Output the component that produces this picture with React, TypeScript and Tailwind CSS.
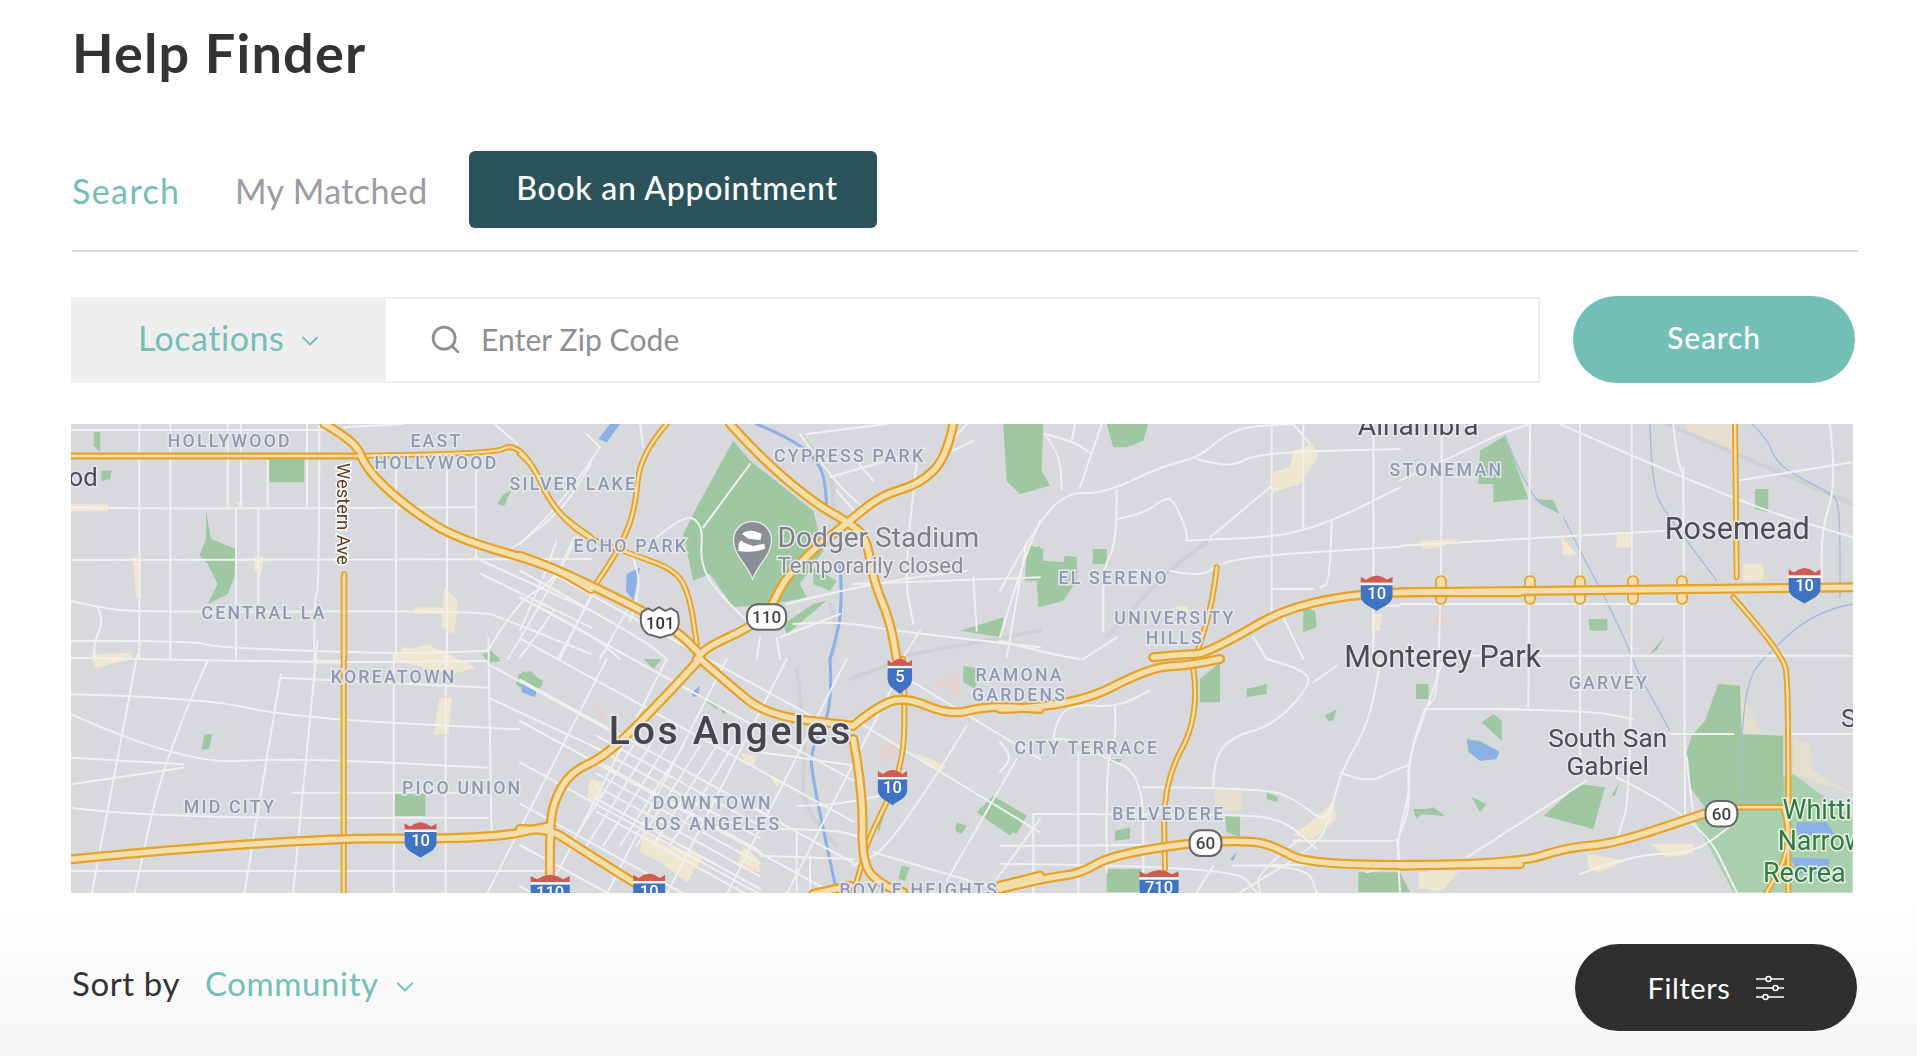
import React from "react";
import { ChevronDown, Search as SearchIcon } from "lucide-react";

type P = number[];
type Crop = {
  o: [number, number, number, number];
  minor?: P[]; thin?: P[]; major?: P[]; park?: P[]; light?: P[]; cream?: P[]; tan?: P[]; water?: P[]; river?: P[]; rail?: P[]; pink?: P[];
};

const A: Crop = {
  o: [71, 423, 3, 3],
  minor: [
    [0,18,760,18],[820,10,1000,0],[0,250,200,255,1210,250],[0,408,1560,405],[0,530,80,550,200,565,1230,560,1300,585,1560,690],[0,650,390,650,410,670,1010,690,1250,680],
    [205,0,205,705],[298,0,298,705],[470,0,470,250],[510,0,510,250],[495,255,495,705],[562,255,562,550],[590,110,590,250],[708,0,708,250],[745,0,745,500,730,520,730,705],
    [975,100,975,705],[1128,100,1128,705],[1215,100,1215,400],[1210,400,1560,560],[1230,450,1560,610],[1250,680,1340,530,1440,480,1520,340],[1310,705,1440,490,1510,340],
    [1320,375,1460,280,1560,120],[1460,705,1560,520],[80,550,100,590,70,650,70,705],[1270,0,1340,60],
  ],
  thin: [[880,95,1270,90,1320,60,1380,110,1450,260,1560,340],[820,450,820,705]],
  major: [[760,0,850,50,880,120,930,180,1030,265,1160,345,1440,425,1560,495]],
  park: [[405,262,420,345,495,375,490,460,470,510,410,540,440,480,410,420,385,395,405,345],[595,105,700,105,700,175,595,175],[68,25,88,25,88,85,68,65],[90,140,122,140,118,165,92,172],[1320,200,1300,245,1278,240,1298,210],[1240,700,1260,685,1290,705]],
  cream: [[1120,490,1160,530,1150,630,1110,610],[1030,550,1120,550,1120,570,1030,570],[490,230,520,235,510,255],[185,400,210,400,210,520,195,520],[550,395,578,400,570,460,550,440],[990,670,1130,680,1130,705,990,705],[100,690,180,690,180,705,100,705],[0,240,110,240,110,262,0,262]],
};
const Z: Crop = {
  o: [0, 420, 1.638, 3],
  minor: [
    [117,710,520,725,800,720],[117,820,330,830,480,890,850,925],[117,880,300,1030,480,1010,800,1040],[117,1010,300,1030],[117,1090,300,1040],[117,1160,240,1190,800,1190],
    [117,1350,900,1350],[480,1115,800,1115],[460,770,800,800],[340,720,270,1000,220,1420],[225,700,150,1420],[460,760,400,1420],[520,660,480,1420],[645,700,645,1420],[730,700,730,1420],[800,650,805,1240],
    [800,730,1000,930],[800,830,1000,1000],
  ],
  thin: [[563,470,563,1420]],
  major: [[117,1315,480,1250,800,1255,900,1215]],
  park: [[646,1115,697,1115,697,1185,646,1185],[335,940,348,940,342,985,330,985],[790,700,805,690,820,720,800,725],[850,760,870,750,890,790,870,825,845,790]],
  cream: [[650,700,700,670,780,740,740,760,650,720],[720,830,740,830,735,940,710,940],[150,700,215,695,215,715,155,740],[510,715,560,715,560,730,510,730]],
};
const B: Crop = {
  o: [520, 423, 3, 3],
  rail: [[850,40,940,150,940,260],[930,540,960,640,930,705],[1130,700,1560,620]],
  minor: [
    [0,440,360,640,440,705],[0,520,200,620,300,705],[60,480,0,620],[225,490,120,705],[320,560,240,705],[240,70,140,220,0,360],[110,350,70,460],[330,380,360,450,350,530,330,590],
    [410,340,500,265,550,310,540,400,570,480,680,590],[550,310,690,120],[800,540,1040,480,1340,440],[820,600,950,590,1120,620,1560,670],[1360,460,1370,620],[1190,120,1150,440,1180,600],[780,640,960,570],
    [1000,480,1560,460],[1440,640,1500,440,1560,290],[840,30,940,170,1040,260],[930,160,1200,80],[1000,100,1060,170],[860,30,1100,0],[1340,0,1250,100],[950,200,1020,280],[1300,80,1360,50],
    [200,30,240,70],[360,0,370,70],[0,700,60,620,100,560],[1150,700,1200,620],[720,640,710,705],[770,640,780,705],
  ],
  thin: [[0,90,40,120,90,240,190,340,350,395,470,440,510,520,530,660],[440,0,360,90,345,260,300,370,225,485]],
  major: [
    [0,395,100,430,360,555,470,620,540,690],[630,0,720,100,880,235,985,295,1040,340,1060,470,1110,590,1130,705],
    [1300,0,1280,100,1200,180,1080,215,985,295,880,375,790,470,750,560,690,610,560,670,530,705],
  ],
  park: [[640,50,690,110,880,260,910,380,840,480,860,520,760,540,640,550,570,450,520,470,490,330,530,250,590,140],[880,430,950,470,930,500,880,480],[800,630,920,530,880,540,790,600],[1450,0,1560,0,1560,170,1530,180,1500,210,1460,170],[1320,620,1450,580,1445,640],[1520,380,1560,365,1560,470,1515,470]],
  water: [[235,45,270,0,300,0,260,55],[320,450,360,430,340,530,318,500]],
  river: [[710,0,830,50,910,130,920,240],[960,420,970,560,930,705]],
};
const lat: P[] = [];
for (let i = 0; i < 17; i += 2) lat.push([0, -310 + i * 62, 1000, 240 + i * 62]);
for (let i = 0; i < 7; i++) lat.push([230, 230 + i * 38, 720, 500 + i * 38]);
for (let i = 0; i < 12; i += 2) lat.push([-100 + i * 90, 705, 260 + i * 90, 0]);
for (let i = 0; i < 7; i++) lat.push([150 + i * 50, 560, 340 + i * 50, 260]);
const C: Crop = {
  o: [520, 658, 3, 3],
  rail: [[830,30,860,260,840,430,950,560],[990,60,1100,20]],
  minor: [...lat, [1000,180,1560,520],[1180,70,1560,300],[1340,200,1120,560,1000,620],[1490,300,1280,665],[1560,480,1430,660],[720,280,1010,320],[730,510,950,510,1030,540],[830,440,930,440,1080,410],[720,590,1000,600],[830,520,830,700],[870,590,870,700],[1060,580,1400,680]],
  thin: [[1150,0,1155,110,1150,330,1040,550,1025,620,1000,700]],
  major: [
    [540,0,420,130,260,290,150,340,100,430,90,510,90,705],[0,510,90,510,150,550,340,670,400,705],[540,0,620,70,740,170,1000,200],
    [1000,200,1060,150,1150,110,1290,170,1400,140,1560,150],[1000,240,1030,400,1025,620,1090,680,1150,700],[1440,680,1560,650],[880,705,990,680],
  ],
  park: [[1420,410,1520,470,1470,530,1370,460],[1310,490,1340,500,1325,525,1305,515],[1145,620,1170,625,1155,665,1135,660],[1105,430,1075,525,1075,490],[560,120,600,140,590,150,560,130],[600,150,620,160,610,165],[1330,20,1380,30,1365,90,1330,70],[5,35,70,65,55,85,5,60],[370,0,425,0,400,30]],
  cream: [[370,520,440,560,550,590,500,670,420,610,360,580],[670,560,715,600,720,640,650,620],[210,360,250,370,240,420,200,425],[750,350,785,370,770,385],[660,280,710,290,700,320,680,320],[1180,280,1280,320,1260,340]],
  pink: [[1080,260,1130,240,1130,300,1090,310],[1240,70,1320,50,1320,120],[210,140,260,165,240,185]],
  water: [[515,100,540,80,535,110,520,115],[5,75,50,90,45,115,5,100]],
  river: [[930,0,940,150,870,270,880,370,950,700]],
};
const D: Crop = {
  o: [1000, 423, 3, 3],
  rail: [[320,640,500,440,620,355]],
  minor: [
    [0,500,80,350,190,205,310,210,490,125,600,100,700,10,880,0],[590,105,690,135,770,85,1200,75],[815,0,815,560],[910,0,910,310],[1120,0,1120,700],[630,340,810,190],
    [560,350,640,345,830,340,990,295,1200,190],[670,420,700,400,1200,368],[350,200,350,290,340,380,310,430,310,620],[350,285,430,270,490,225,520,225,560,320,560,350],[510,440,600,460,660,420],
    [815,495,940,495],[1160,545,1200,545],[995,295,990,480,960,490],[240,190,305,0],[135,30,180,90,185,195],[135,30,215,50,275,90],[215,50,225,0],[0,650,150,690,240,705],[20,700,80,350],[880,0,930,60],
    [350,640,250,705],[760,640,800,705],[850,580,910,705],
  ],
  thin: [[650,430,640,530,590,690]],
  major: [[460,700,560,690,620,690,940,505,1560,505]],
  park: [[20,0,130,0,125,140,150,185,60,210,20,170],[320,0,445,0,430,50,380,70,340,70],[90,365,130,375,130,410,190,415,195,395,230,400,230,470,190,530,115,550,110,470,75,470],[278,375,320,375,320,420,278,420],[910,550,945,560,950,610,910,625]],
  cream: [[820,145,870,130,880,80,940,60,955,95,900,180,820,205],[1115,570,1145,570,1140,620,1115,620],[530,545,565,545,560,600,530,600]],
  pink: [[1305,570,1340,570,1340,600,1305,600]],
};
const E: Crop = {
  o: [1000, 658, 3, 3],
  minor: [
    [0,250,40,290,0,340],[160,240,170,170,230,135,350,145,450,95],[345,145,350,240,320,300,320,640],[160,240,210,235,300,290,430,345,430,640],[235,280,235,700],[100,465,100,700],[100,465,700,465,850,480,950,570],
    [430,385,800,385,900,430,970,490,1000,430],[0,560,480,560,570,545],[640,385,640,300,700,230,820,200,940,70,900,30,800,0],[1140,0,1120,170,1020,340,990,480,950,560,720,700],[1020,340,1100,375,1190,330,1225,320],
    [1330,0,1280,150,1225,300,1230,400,1190,540,1200,700],[1280,150,1560,150],[880,545,1190,545],[0,615,700,620,770,700],[750,620,920,620,950,700],[640,620,590,700],[900,540,770,640,780,700],[1100,640,1180,620],
    [940,70,1010,20],[1190,540,1200,610],[700,620,1100,615],
  ],
  thin: [[580,30,600,170,490,370,495,630]],
  major: [[0,150,220,145,450,25,560,20,660,0],[0,690,140,655,240,645,330,590,580,550,750,545,820,560,930,620,1560,615]],
  park: [[600,60,660,10,660,130,600,130],[740,90,800,75,800,105,740,115],[1250,75,1285,75,1285,120,1250,120],[975,170,1010,150,1000,185,985,185],[0,430,80,470,50,525,0,495],[345,515,390,505,390,540,345,545],[675,470,720,470,720,535,680,520],[800,400,835,415,830,430,800,420],[1240,450,1280,450,1300,445,1335,470,1265,465,1250,480],[320,630,425,630,415,700,320,700],[1075,640,1200,640,1230,700,1075,700],[325,300,365,300,360,310,325,310]],
  tan: [[645,390,725,390,725,455,645,455]],
  cream: [[880,530,1000,430,1010,480,940,540],[1255,640,1375,640,1330,690,1255,690]],
  water: [[690,600,710,580,700,605]],
};
const F: Crop = {
  o: [1400, 423, 3, 3],
  rail: [[800,0,1357,240]],
  minor: [
    [0,365,800,320],[390,0,385,850],[540,0,540,1000],[695,0,700,1090,650,1250],[850,130,855,1170],[820,0,830,100,850,160],[480,0,1000,230,1357,340],[1010,170,1357,115],[1290,0,1310,180,1265,310,1265,480],
    [0,695,1357,695],[75,855,540,855,700,885],[75,855,20,1000,30,1150,0,1230],[810,930,1000,930],[1170,930,1357,930],[650,1060,900,1180,1010,1405],[200,1300,560,1070],[0,540,860,540],[125,0,125,800,75,855],[120,115,300,30],[0,170,120,115],
    [300,30,390,0],[540,1350,700,1290,880,1290,1000,1200],[880,1180,860,1000],
  ],
  thin: [[1005,0,1010,460],[1000,520,1150,690,1165,780,1165,1405],[1010,1150,1150,1150],[1150,1150,1165,1200,1160,1300,1100,1405]],
  major: [[0,505,1357,490],[0,1325,350,1320,500,1270,640,1260,910,1170]],
  light: [[1180,1050,1357,1180,1357,1405,1000,1405,880,1180,920,1140]],
  park: [[240,80,315,35,385,225,280,235,280,180,235,180],[400,225,460,228,478,270],[1065,195,1105,195,1105,265,1065,255],[565,585,622,585,622,620,570,620],[48,782,85,782,85,825,48,825],[750,690,795,635,770,680],[245,895,280,870,305,890,305,950],[430,1175,540,1080,615,1090,580,1215],[635,1115,660,1070,645,1115],[955,780,1020,785,1025,930,1150,935,1150,1150,1010,1150,915,1150,870,1090,860,985,875,935,915,890],[200,945,240,950,298,985,290,1005,240,1010,205,985],[215,1120,260,1140,240,1165],[40,1155,90,1155,130,1175,60,1170,50,1185]],
  tan: [[860,0,1000,0,1000,90,860,30],[1180,940,1230,960,1240,1040,1357,1110,1180,1050],[1020,800,1085,930,1120,950,1090,950,1020,930]],
  cream: [[1030,420,1090,420,1090,470,1030,470],[750,1260,880,1260,880,1290,800,1300],[560,1290,680,1310,600,1345,565,1330],[90,1340,175,1340,120,1400,90,1400],[480,330,520,380,530,390,490,395],[650,325,700,330,695,370,650,370],[60,350,180,345,120,370,70,375]],
  water: [[1190,1195,1280,1195,1310,1240,1190,1230],[1170,1300,1290,1305,1280,1350,1200,1350]],
};
const lake: P[] = [[1400,245,1440,250,1495,275,1490,300,1440,305,1410,280]];
const fine: P[] = [[1055,0,1100,40,1135,130,1290,205,1320,240,1320,520],[750,0,755,190,800,270,860,350,950,470],[490,280,550,400,620,530,690,680,710,740,810,920],[1357,540,1250,560,1100,690,1040,770,1020,1000,1030,1100],[315,35,390,225,475,265]];
const crops = [Z, A, B, C, D, E, F];

const tr = (c: Crop, a: P) => {
  const [ox, oy, kx, ky] = c.o;
  return a.map((v, i) => (i % 2 ? oy + v / ky : ox + v / kx));
};
const pts = (c: Crop, a: P) => tr(c, a).map((v) => v.toFixed(1)).join(",");
const smooth = (c: Crop, raw: P) => {
  const a = tr(c, raw).map((v) => +v.toFixed(1));
  let d = `M${a[0]} ${a[1]}`;
  for (let i = 2; i < a.length - 2; i += 2) {
    d += `Q${a[i]} ${a[i + 1]} ${(a[i] + a[i + 2]) / 2} ${(a[i + 1] + a[i + 3]) / 2}`;
  }
  return d + `L${a[a.length - 2]} ${a[a.length - 1]}`;
};
const fills = (key: "cream" | "tan" | "light" | "park" | "water" | "pink", fill: string) =>
  crops.flatMap((c, i) => (c[key] || []).map((p, j) => <polygon key={`${key}${i}${j}`} points={pts(c, p)} fill={fill} />));
const strokes = (key: "minor" | "thin" | "major" | "river" | "rail", stroke: string, w: number) =>
  crops.flatMap((c, i) => (c[key] || []).map((p, j) => <path key={`${key}${stroke}${i}${j}`} d={smooth(c, p)} stroke={stroke} strokeWidth={w} />));

const labels: [string, number, number][] = [
  ["HOLLYWOOD",188,365],["EAST",357,365],["HOLLYWOOD",357,383],["SILVER LAKE",469,400],["CYPRESS PARK",695,377],["ECHO PARK",516,451],
  ["CENTRAL LA",216,506],["KOREATOWN",322,558],["PICO UNION",378,649],["MID CITY",188,664],["DOWNTOWN",583,661],["LOS ANGELES",583,678],
  ["EL SERENO",911,477],["UNIVERSITY",961,510],["HILLS",961,526],["RAMONA",834,556],["GARDENS",834,573],["CITY TERRACE",889,616],
  ["BELVEDERE",956,670],["STONEMAN",1183,389],["GARVEY",1316,563],["BOYLE HEIGHTS",752,732],
];
const cities: [string, number, number, number][] = [
  ["Alhambra",1160,355,23],["Rosemead",1421,440,25],["Monterey Park",1180,545,25],["South San",1315,610,21.5],["Gabriel",1315,633,21.5],["od",68,397,21],["S",1512,594,21],
];
const green: [string, number, number][] = [["Whitti",1458,669],["Narrow",1454,695],["Recrea",1442,721]];

const Interstate = ({ x, y, n, w = 26 }: { x: number; y: number; n: string; w?: number }) => (
  <g transform={`translate(${x} ${y})`}>
    <path d={`M${-w / 2} -8V-13l${w / 6} 2.5 ${w / 6} -2.5 ${w / 6} -1 ${w / 6} 1 ${w / 6} 2.5 ${w / 6} -2.5V-8Z`} fill="#cf5b55" />
    <rect x={-w / 2} y={-8} width={w} height={2} fill="#fff" />
    <path d={`M${-w / 2} -6H${w / 2}V3C${w / 2} 9 ${w / 6} 12 0 15C${-w / 6} 12 ${-w / 2} 9 ${-w / 2} 3Z`} fill="#3f73c4" />
    <text x={0} y={5} textAnchor="middle" fontSize={13.5} fontWeight={500} fill="#fff">{n}</text>
  </g>
);
const Pill = ({ x, y, n, w = 28 }: { x: number; y: number; n: string; w?: number }) => (
  <g>
    <rect x={x - w / 2} y={y - 10.5} width={w} height={21} rx={9} fill="#fff" stroke="#666" strokeWidth={1.6} />
    <text x={x} y={y + 5} textAnchor="middle" fontSize={14} fontWeight={500} fill="#444">{n}</text>
  </g>
);

function MapArt() {
  return (
    <svg viewBox="71 423 1782 469" className="block w-full h-full blur-[0.4px]" fontFamily="Roboto, sans-serif">
      <rect x={71} y={423} width={1782} height={469} fill="#d8d9dd" />
      {fills("cream", "#efe7cf")}
      {fills("tan", "#e4dfcf")}
      {fills("pink", "#e2d3d2")}
      {fills("light", "#a9cfac")}
      {fills("park", "#9fc8a2")}
      {fills("water", "#8cb0e8")}
      {lake.map((p, i) => <polygon key={i} points={pts(E, p)} fill="#8cb0e8" />)}
      <g fill="none" strokeLinecap="round" strokeLinejoin="round">
        {strokes("rail", "#cfd0d4", 4)}
        {fine.map((p, i) => <path key={i} d={smooth(F, p)} stroke="#a3bbe0" strokeWidth={1.3} />)}
        {strokes("river", "#8cb0e8", 3)}
        {strokes("minor", "#f0f0f0", 2)}
      </g>
      <g fill="#f3deaa" stroke="#e5a128" strokeWidth={1.7}>
        {[1441, 1530, 1580, 1633, 1682].map((x) => <rect key={x} x={x - 5} y={575} width={10} height={28} rx={5} />)}
      </g>
      <g fill="none" strokeLinejoin="round" strokeLinecap="round">
        {strokes("thin", "#e5a128", 6)}
        {strokes("thin", "#f3deaa", 2.4)}
        {strokes("major", "#e5a128", 10)}
        {strokes("major", "#f3deaa", 5.6)}
      </g>
      <path d="M71 455H358" fill="none" stroke="#e5a128" strokeWidth={7} />
      <path d="M71 455H358" fill="none" stroke="#f3deaa" strokeWidth={2.6} />
      <g transform="scale(1.2226 1.2222)">
        <g fontSize={14.5} fontWeight={500} letterSpacing={1.8} fill="#8e99b2" stroke="#e6e7ea" strokeWidth={2.5} paintOrder="stroke" textAnchor="middle">
          {labels.map(([t, x, y], i) => <text key={i} x={x} y={y}>{t}</text>)}
        </g>
        <g fill="#4f4a5a" stroke="#e6e7ea" strokeWidth={2.5} paintOrder="stroke" textAnchor="middle">
          {cities.map(([t, x, y, s], i) => <text key={i} x={x} y={y} fontSize={s}>{t}</text>)}
        </g>
        <g fontSize={22} fill="#2f7d3c" stroke="#e8efe8" strokeWidth={2.5} paintOrder="stroke">
          {green.map(([t, x, y], i) => <text key={i} x={x} y={y}>{t}</text>)}
        </g>
        <text x={498} y={608} fontSize={32} fontWeight={500} letterSpacing={2.2} fill="#45454d" stroke="#e6e7ea" strokeWidth={3} paintOrder="stroke">Los Angeles</text>
        <text x={636} y={447} fontSize={23} fill="#7c7f86" stroke="#e6e7ea" strokeWidth={2.5} paintOrder="stroke">Dodger Stadium</text>
        <text x={636} y={468} fontSize={18} fill="#8a8d93" stroke="#e6e7ea" strokeWidth={2.5} paintOrder="stroke">Temporarily closed</text>
        <text transform="translate(276 378) rotate(90)" fontSize={15} fill="#5a3d1e" stroke="#fff" strokeWidth={2.5} paintOrder="stroke">Western Ave</text>
        <path d="M615.5 426C606 426 600 433 600 441.500C600 453 611 461 615.500 473C620 461 631 453 631 441.500C631 433 625 426 615.500 426Z" fill="#8b8f95" stroke="#eee" strokeWidth={1} />
        <path d="M604 445C605 441 607 441 608 443L616 446L625 444L626 448C620 451 610 451 604 450ZM607 436C611 432 618 433 623 436L622 441L612 440Z" fill="#fff" />
        <path d="M525 500L530 497L534 499L539 496L544 499L549 497L554 500C556 508 556 514 550 518L540 521L530 518C524 514 523 508 525 500Z" fill="#fff" stroke="#666" strokeWidth={1.6} />
        <text x={540} y={514} textAnchor="middle" fontSize={13.5} fontWeight={500} fill="#333">101</text>
        <Pill x={627} y={504} n="110" w={32} />
        <Pill x={986} y={689} n="60" w={26} />
        <Pill x={1408} y={665} n="60" w={26} />
        <Interstate x={736} y={552} n="5" w={20} />
        <Interstate x={730} y={643} n="10" w={24} />
        <Interstate x={344} y={686} n="10" />
        <Interstate x={1126} y={484} n="10" />
        <Interstate x={1476} y={478} n="10" />
        <Interstate x={450} y={729} n="110" w={32} />
        <Interstate x={531} y={728} n="10" />
        <Interstate x={948} y={725} n="710" w={32} />
      </g>
    </svg>
  );
}

function SlidersIcon() {
  return (
    <svg width="30" height="28" viewBox="0 0 30 28" fill="none" stroke="#fff" strokeWidth="1.5">
      <path d="M1 5H11M16 5H29M1 14H18M23 14H29M1 23H8M13 23H29" />
      <circle cx="13.5" cy="5" r="2.5" /><circle cx="20.5" cy="14" r="2.5" /><circle cx="10.5" cy="23" r="2.5" />
    </svg>
  );
}

export default function App() {
  return (
    <div className="h-[1056px] overflow-hidden bg-gradient-to-b from-white from-[85%] to-[#f6f6f6] font-['Lato',sans-serif]">
      <div className="w-[1789px] ml-[71px] flex flex-col">
        <h1 className="h-[106px] pt-[20px] ml-px text-[54px] leading-[66px] font-bold text-[#333333] tracking-[1.2px]">Help Finder</h1>
        <div className="h-[46px]" />
        <div className="flex items-center ml-px mr-[2px] h-[100px] pb-[23px] border-b-2 border-[#d8d8d8]">
          <span className="text-[34px] text-[#73bfb8] tracking-[1.4px] w-[163px] pt-[2px]">Search</span>
          <span className="text-[34px] text-[#9b9aa5] tracking-[0.4px] w-[234px] pt-[2px]">My Matched</span>
          <button className="w-[408px] h-[77px] pl-[8px] pb-[3px] rounded-[6px] bg-[#2b535c] text-white text-[32px] tracking-[0.7px] font-medium">Book an Appointment</button>
        </div>
        <div className="flex items-center mt-[44px] h-[87px]">
          <div className="flex w-[1469px] h-[86px] border-2 border-[#eeeeee]">
            <div className="w-[313px] bg-[#eeeeee] flex items-center justify-center gap-[12px] pl-[3px] text-[#73bfb8] text-[34px] tracking-[0.5px] pb-[4px]">
              Locations <ChevronDown size={28} strokeWidth={1.6} className="mt-[6px]" />
            </div>
            <div className="flex-1 flex items-center bg-white pl-[43px] gap-[19px] text-[30px] text-[#8e8e96] tracking-[0.1px]">
              <SearchIcon size={33} strokeWidth={2} />
              <span>Enter Zip Code</span>
            </div>
          </div>
          <button className="ml-[33px] w-[282px] h-[87px] rounded-full bg-[#73bfb8] text-white text-[30px] tracking-[0.8px] font-medium pb-[4px]">Search</button>
        </div>
        <div className="mt-[41px] w-[1782px] h-[469px]">
          <MapArt />
        </div>
        <div className="flex items-center justify-between mt-[51px] h-[87px]">
          <div className="flex items-center ml-px text-[33px] -mt-[8px]">
            <span className="text-[#333333] tracking-[0.6px] w-[133px]">Sort by</span>
            <span className="text-[#73bfb8] tracking-[0.6px]">Community</span>
            <ChevronDown size={28} strokeWidth={1.6} className="text-[#73bfb8] ml-[12px] mt-[6px]" />
          </div>
          <button className="mr-[3px] w-[282px] h-[87px] rounded-full bg-[#2f2f2f] text-white text-[29px] tracking-[0.6px] flex items-center justify-center gap-[24px]">
            Filters <SlidersIcon />
          </button>
        </div>
      </div>
    </div>
  );
}
